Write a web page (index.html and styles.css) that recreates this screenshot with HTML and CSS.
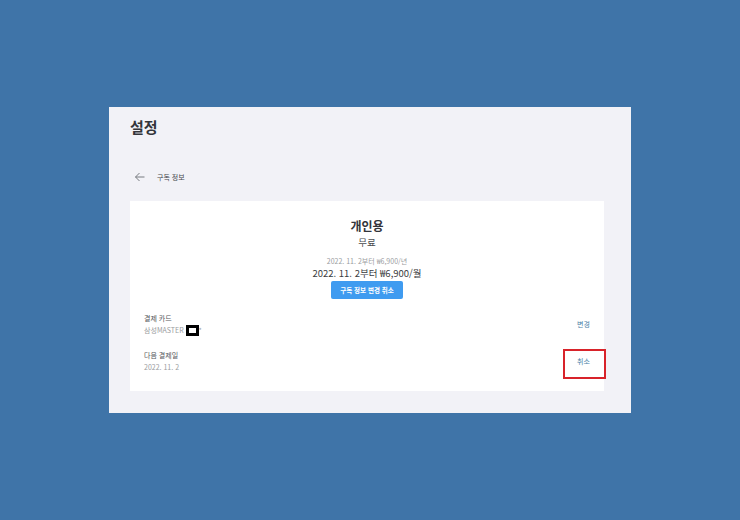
FILE: index.html
```html
<!DOCTYPE html>
<html lang="ko">
<head>
<meta charset="utf-8">
<title>설정</title>
<link rel="stylesheet" href="styles.css">
</head>
<body>
<main class="panel">
  <h1 class="title">설정</h1>
  <div class="nav">
    <svg class="back" viewBox="0 0 12 12" width="12" height="12" aria-hidden="true"><path d="M10.5 6H1.5M5.5 2 1.5 6l4 4" fill="none" stroke="#777b80" stroke-width="1"/></svg>
    <span class="nav-label">구독 정보</span>
  </div>
  <section class="card">
    <h2 class="plan">개인용</h2>
    <div class="tier">무료</div>
    <div class="old-price">2022. 11. 2부터 ₩6,900/년</div>
    <div class="price">2022. 11. 2부터 ₩6,900/월</div>
    <button class="cancel-change">구독 정보 변경 취소</button>
    <div class="row row-first">
      <div>
        <div class="row-label">결제 카드</div>
        <div class="row-value">삼성MASTER<span class="redact"></span>*</div>
      </div>
      <a class="action">변경</a>
    </div>
    <div class="row row-second">
      <div>
        <div class="row-label">다음 결제일</div>
        <div class="row-value">2022. 11. 2</div>
      </div>
      <a class="action">취소</a>
      <span class="highlight"></span>
    </div>
  </section>
</main>
</body>
</html>
```
FILE: styles.css
```css
* { box-sizing: border-box; }
html, body { height: 100%; }
body {
  margin: 0;
  background: #3f74a8;
  display: flex;
  align-items: center;
  justify-content: center;
  font-family: "Noto Sans CJK KR", "Noto Sans", sans-serif;
  color: #2b2b2f;
}
.panel {
  width: 522px;
  height: 306px;
  background: #f2f2f7;
  padding: 9px 27px 0 21px;
}
.title {
  margin: 0;
  font-size: 15px;
  line-height: 22px;
  font-weight: 700;
  color: #33353a;
}
.nav {
  display: flex;
  align-items: center;
  margin-top: 32px;
  height: 14px;
  padding-left: 4px;
}
.nav-label {
  margin-left: 11px;
  font-size: 7px;
  line-height: 10px;
  color: #44474c;
}
.card {
  position: relative;
  margin-top: 17px;
  height: 190px;
  background: #fff;
  padding: 16px 14px 0 14px;
  display: flex;
  flex-direction: column;
  align-items: center;
}
.plan {
  margin: 0;
  font-size: 12px;
  line-height: 17px;
  font-weight: 700;
  color: #33353a;
}
.tier {
  margin-top: 1px;
  font-size: 9.5px;
  line-height: 14px;
  color: #4a4c50;
}
.old-price {
  margin-top: 7px;
  font-size: 7px;
  line-height: 10px;
  color: #9a9ca0;
}
.price {
  margin-top: 0;
  font-size: 9.5px;
  line-height: 14px;
  color: #3a3c40;
}
.cancel-change {
  margin-top: 1px;
  width: 72px;
  height: 18px;
  padding: 0;
  border: 0;
  border-radius: 2px;
  background: #3f9bf0;
  color: #fff;
  font-family: inherit;
  font-size: 6.5px;
  font-weight: 700;
}
.row {
  position: relative;
  align-self: stretch;
  display: flex;
  justify-content: space-between;
  align-items: center;
  height: 22px;
}
.row-first { margin-top: 14px; }
.row-second { margin-top: 15px; }
.row-label {
  font-size: 7px;
  line-height: 10px;
  color: #55585c;
}
.row-value {
  margin-top: 2px;
  display: flex;
  align-items: center;
  height: 10px;
  font-size: 7px;
  line-height: 10px;
  color: #9a9ca0;
}
.redact {
  flex: none;
  width: 13px;
  height: 11px;
  margin: 1px 0 0 2px;
  background: #fff;
  border: 3px solid #000;
}
.action {
  font-size: 7px;
  line-height: 10px;
  color: #4a7fa8;
}
.highlight {
  position: absolute;
  right: -16px;
  top: -1px;
  width: 43px;
  height: 30px;
  border: 2px solid #d8232a;
}
```
